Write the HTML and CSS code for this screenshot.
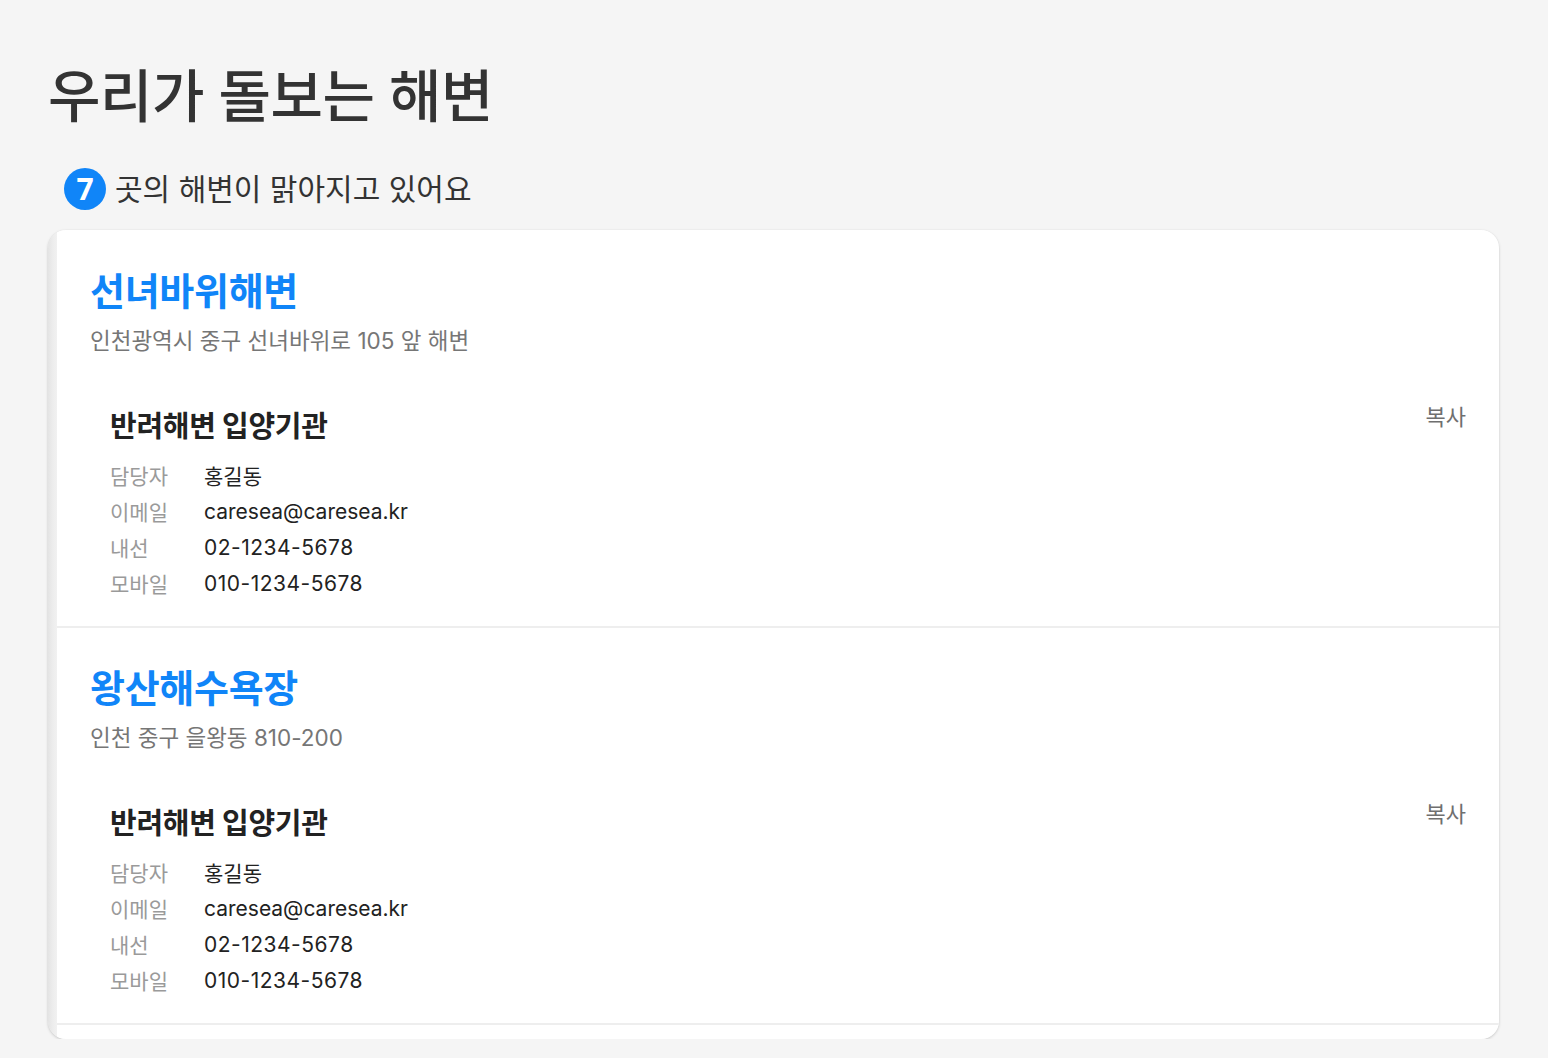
FILE: index.html
```html
<!DOCTYPE html>
<html lang="ko">
<head>
<meta charset="utf-8">
<title>우리가 돌보는 해변</title>
<link rel="stylesheet" href="styles.css">
</head>
<body>
<main class="page">
  <h1 class="page-title">우리가 돌보는 해변</h1>
  <p class="summary"><span class="badge">7</span>곳의 해변이 맑아지고 있어요</p>
  <section class="card">
    <article class="beach">
      <h2 class="beach-name">선녀바위해변</h2>
      <p class="beach-addr">인천광역시 중구 선녀바위로 105 앞 해변</p>
      <div class="org">
        <div class="org-head">
          <h3 class="org-title">반려해변 입양기관</h3>
          <button class="copy">복사</button>
        </div>
        <dl class="info">
          <dt>담당자</dt><dd>홍길동</dd>
          <dt>이메일</dt><dd>caresea@caresea.kr</dd>
          <dt>내선</dt><dd class="num">02-1234-5678</dd>
          <dt>모바일</dt><dd class="num">010-1234-5678</dd>
        </dl>
      </div>
    </article>
    <article class="beach">
      <h2 class="beach-name">왕산해수욕장</h2>
      <p class="beach-addr">인천 중구 을왕동 810-200</p>
      <div class="org">
        <div class="org-head">
          <h3 class="org-title">반려해변 입양기관</h3>
          <button class="copy">복사</button>
        </div>
        <dl class="info">
          <dt>담당자</dt><dd>홍길동</dd>
          <dt>이메일</dt><dd>caresea@caresea.kr</dd>
          <dt>내선</dt><dd class="num">02-1234-5678</dd>
          <dt>모바일</dt><dd class="num">010-1234-5678</dd>
        </dl>
      </div>
    </article>
  </section>
</main>
</body>
</html>
```

FILE: styles.css
```css
* { box-sizing: border-box; }
html, body {
  margin: 0;
  padding: 0;
  background: #f5f5f5;
  font-family: Inter, "Noto Sans CJK KR", sans-serif;
  color: #222;
}
.page {
  padding: 58px 49px 0 48px;
}
.page-title {
  margin: 0;
  font-size: 57px;
  line-height: 78px;
  font-weight: 500;
  color: #333;
  letter-spacing: -0.5px;
}
.summary {
  margin: 32px 0 0 16px;
  display: flex;
  align-items: center;
  font-size: 30px;
  line-height: 42px;
  color: #333;
}
.badge {
  width: 42px;
  height: 42px;
  border-radius: 50%;
  background: #1085f8;
  color: #fff;
  font-weight: 700;
  font-size: 30px;
  display: flex;
  align-items: center;
  justify-content: center;
  margin-right: 9px;
  font-family: "Noto Sans", sans-serif;
}
.card {
  margin-top: 20px;
  border-radius: 18px;
  background: linear-gradient(to right, #e4e4e4 0, #ededed 5px, #f1f1f1 9px, #fff 9px);
  box-shadow: 0 1px 3px rgba(0, 0, 0, 0.18), 0 0 1px rgba(0, 0, 0, 0.08);
  padding-bottom: 14px;
  overflow: hidden;
}
.beach {
  margin-left: 9px;
  padding: 39px 33px 25px 33px;
  border-bottom: 2px solid #eeeeee;
}
.beach + .beach {
  padding-top: 38px;
}
.beach-name {
  margin: 0;
  font-size: 38px;
  line-height: 44px;
  font-weight: 700;
  color: #1085f8;
  letter-spacing: -0.3px;
}
.beach-addr {
  margin: 13px 0 0;
  font-size: 22.5px;
  line-height: 30px;
  color: #767676;
}
.org {
  margin-top: 53px;
  padding-left: 20px;
}
.org-head {
  display: flex;
  justify-content: space-between;
  align-items: flex-start;
}
.org-title {
  margin: 0;
  font-size: 29px;
  line-height: 36px;
  font-weight: 700;
  color: #222;
  letter-spacing: -0.3px;
}
.copy {
  border: 0;
  background: none;
  padding: 0;
  margin-top: -7px;
  font-family: inherit;
  font-size: 22px;
  line-height: 30px;
  color: #6f6f6f;
  cursor: pointer;
}
.info {
  margin: 12px 0 0;
  display: grid;
  grid-template-columns: 94px 1fr;
  grid-auto-rows: 36px;
  align-items: center;
  font-size: 21px;
}
.info dt {
  color: #9a9a9a;
  font-size: 21px;
}
.info dd {
  margin: 0;
  color: #222;
}
.info .num {
  letter-spacing: 0.5px;
}
```
